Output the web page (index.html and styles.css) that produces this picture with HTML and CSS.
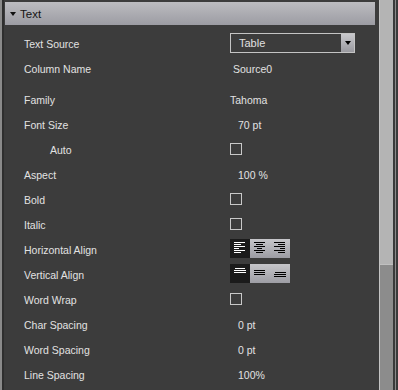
FILE: index.html
```html
<!DOCTYPE html>
<html>
<head>
<meta charset="utf-8">
<link rel="stylesheet" href="styles.css">
</head>
<body>
<div class="frame">
  <div class="edge"><div class="edge-light"></div><div class="edge-dark"></div></div>
  <div class="panel">
    <div class="header"><span class="caret"></span><span class="htitle">Text</span></div>
    <div class="rows">
      <div class="row"><div class="label">Text Source</div><div class="value">
        <div class="select"><span class="sel-text">Table</span><span class="sel-btn"><span class="sel-arrow"></span></span></div>
      </div></div>
      <div class="row"><div class="label">Column Name</div><div class="value v-source">Source0</div></div>
      <div class="row gap-top"><div class="label">Family</div><div class="value v-family">Tahoma</div></div>
      <div class="row"><div class="label">Font Size</div><div class="value v-num">70 pt</div></div>
      <div class="row"><div class="label indent">Auto</div><div class="value"><span class="check"></span></div></div>
      <div class="row"><div class="label">Aspect</div><div class="value v-num">100 %</div></div>
      <div class="row"><div class="label">Bold</div><div class="value"><span class="check"></span></div></div>
      <div class="row"><div class="label">Italic</div><div class="value"><span class="check"></span></div></div>
      <div class="row"><div class="label">Horizontal Align</div><div class="value top">
        <div class="btns">
          <span class="btn active"><svg width="20" height="19" viewBox="0 0 20 19"><g fill="#fff"><rect x="4" y="3" width="11" height="1"/><rect x="4" y="5" width="7" height="1"/><rect x="4" y="7" width="11" height="1"/><rect x="4" y="9" width="5" height="1"/><rect x="4" y="11" width="11" height="1"/><rect x="4" y="13" width="7" height="1"/></g></svg></span>
          <span class="btn"><svg width="20" height="19" viewBox="0 0 20 19"><g fill="#000"><rect x="4" y="3" width="11" height="1"/><rect x="6" y="5" width="7" height="1"/><rect x="4" y="7" width="11" height="1"/><rect x="7" y="9" width="5" height="1"/><rect x="4" y="11" width="11" height="1"/><rect x="6" y="13" width="7" height="1"/></g></svg></span>
          <span class="btn"><svg width="20" height="19" viewBox="0 0 20 19"><g fill="#000"><rect x="4" y="3" width="11" height="1"/><rect x="8" y="5" width="7" height="1"/><rect x="4" y="7" width="11" height="1"/><rect x="10" y="9" width="5" height="1"/><rect x="4" y="11" width="11" height="1"/><rect x="8" y="13" width="7" height="1"/></g></svg></span>
        </div>
      </div></div>
      <div class="row"><div class="label">Vertical Align</div><div class="value top">
        <div class="btns">
          <span class="btn active"><svg width="20" height="19" viewBox="0 0 20 19"><g fill="#fff"><rect x="5" y="4" width="10" height="1"/><rect x="4" y="6" width="12" height="1"/><rect x="4" y="8" width="12" height="1"/></g></svg></span>
          <span class="btn"><svg width="20" height="19" viewBox="0 0 20 19"><g fill="#000"><rect x="4" y="6" width="11" height="1"/><rect x="4" y="8" width="11" height="1"/><rect x="4" y="10" width="11" height="1"/></g></svg></span>
          <span class="btn"><svg width="20" height="19" viewBox="0 0 20 19"><g fill="#000"><rect x="5" y="8" width="11" height="1"/><rect x="4" y="10" width="12" height="1"/><rect x="4" y="12" width="12" height="1"/></g></svg></span>
        </div>
      </div></div>
      <div class="row"><div class="label">Word Wrap</div><div class="value"><span class="check"></span></div></div>
      <div class="row"><div class="label">Char Spacing</div><div class="value v-num">0 pt</div></div>
      <div class="row"><div class="label">Word Spacing</div><div class="value v-num">0 pt</div></div>
      <div class="row"><div class="label">Line Spacing</div><div class="value v-num">100%</div></div>
    </div>
  </div>
  <div class="scroll"><div class="track"></div><div class="thumb"></div></div>
  <div class="redge"><div class="re1"></div><div class="re2"></div><div class="re3"></div></div>
</div>
</body>
</html>
```
FILE: styles.css
```css
html, body {
  margin: 0;
  padding: 0;
  background: #3c3c3c;
  overflow: hidden;
}
.frame {
  display: flex;
  width: 398px;
  height: 390px;
  overflow: hidden;
  font-family: "Liberation Sans", Arial, sans-serif;
  font-size: 10.5px;
  color: #e2e2e2;
}
.edge { display: flex; width: 4px; flex: none; }
.edge-light { width: 2px; background: #8a8a8a; }
.edge-dark { width: 2px; background: #2e2e2e; }
.panel {
  flex: none;
  width: 375px;
  background: #3c3c3c;
}
.header {
  margin: 2px 4px 0 1px;
  height: 23px;
  background: linear-gradient(#bcbcc0, #9c9ca3);
  display: flex;
  align-items: center;
  color: #141414;
  font-size: 11.5px;
}
.caret {
  width: 0; height: 0;
  margin-left: 5px;
  margin-right: 4px;
  border-left: 3.5px solid transparent;
  border-right: 3.5px solid transparent;
  border-top: 4px solid #111;
}
.rows { padding-top: 6px; }
.row {
  height: 25px;
  display: flex;
  align-items: center;
}
.row.gap-top { margin-top: 6px; }
.label { width: 206px; padding-left: 20px; flex: none; }
.label.indent { padding-left: 46px; width: 180px; }
.value { display: flex; align-items: center; }
.value.top { align-self: flex-start; padding-top: 2px; }
.v-num { padding-left: 8px; }
.v-source { padding-left: 3px; }
.v-family { padding-left: 0; }
.select {
  margin-top: -2px;
  width: 123px;
  height: 18px;
  border: 1px solid #c4c4c4;
  display: flex;
  align-items: stretch;
}
.sel-text { flex: 1; padding-left: 8px; display: flex; align-items: center; color: #e0e0e0; font-size: 11px; }
.sel-btn {
  width: 13px;
  background: linear-gradient(#c8c8cc, #9a9aa0);
  display: flex; align-items: center; justify-content: center;
}
.sel-arrow {
  width: 0; height: 0;
  border-left: 3.5px solid transparent;
  border-right: 3.5px solid transparent;
  border-top: 4px solid #000;
}
.check {
  display: block;
  width: 10px; height: 10px;
  border: 1px solid #c8c8c8;
  margin-top: -1px;
}
.btns { display: flex; }
.btn {
  display: block;
  width: 20px; height: 19px;
  background: linear-gradient(#c6c6ca, #9c9ca3);
}
.btn.active { background: #1b1b1b; }
.btn svg { display: block; }
.scroll {
  flex: none;
  width: 13px;
  display: flex;
  flex-direction: column;
  border-left: 1px solid #c4c4c4;
}
.track { height: 264px; background: #b4b4b4; }
.thumb { flex: 1; background: #8c8c8c; border-top: 1px solid #c0c0c0; }
.redge { flex: none; display: flex; width: 5px; }
.re1 { width: 2px; background: #3a3a3a; }
.re2 { width: 1px; background: #8a8a8a; }
.re3 { width: 2px; background: #3a3a3a; }
```
